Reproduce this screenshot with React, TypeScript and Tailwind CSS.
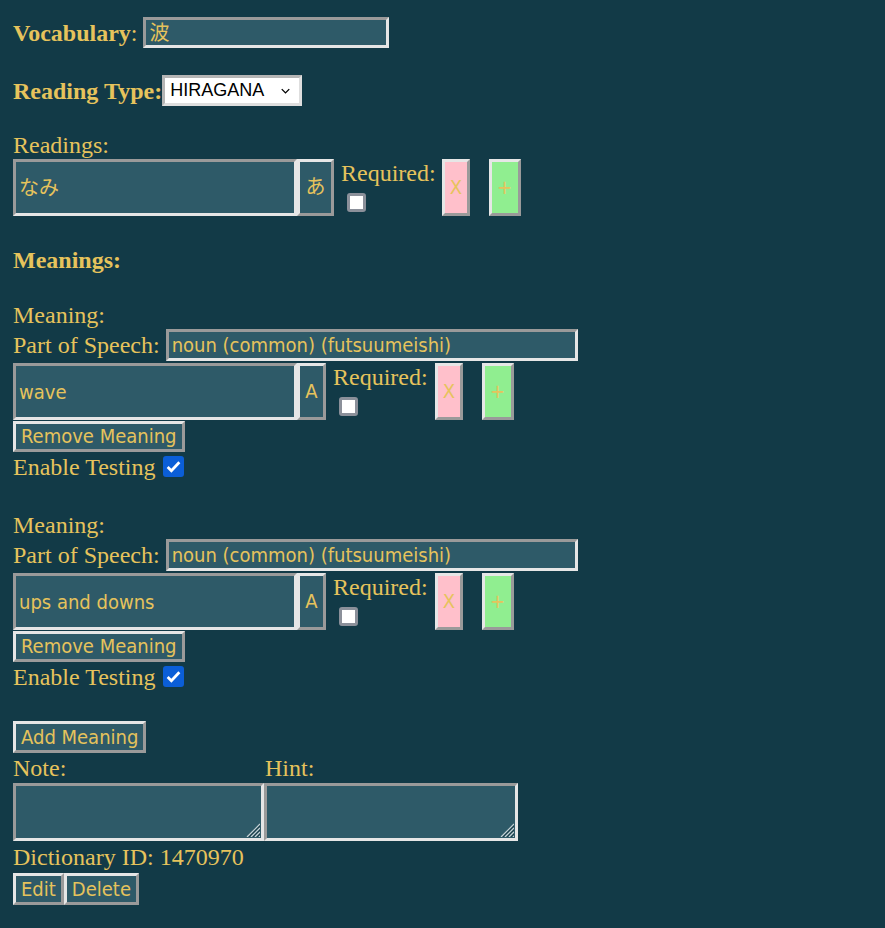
import React from "react";

const serif = "font-['Liberation_Serif',serif]";
const sans = "font-['DejaVu_Sans_Condensed','DejaVu_Sans','Noto_Sans_CJK_JP',sans-serif]";

const inset =
  "border-[3px] border-solid border-t-[#9a9a9a] border-l-[#9a9a9a] border-r-[#e6e6e6] border-b-[#e6e6e6]";
const outset =
  "border-[3px] border-solid border-t-[#e6e6e6] border-l-[#e6e6e6] border-r-[#9a9a9a] border-b-[#9a9a9a]";

function TextBox({ value, className }: { value: string; className: string }) {
  return (
    <div
      className={`${inset} ${sans} bg-[#2e5a68] text-[20px] leading-[24px] text-[#e6c35c] flex items-center px-[3px] ${className}`}
    >
      {value}
    </div>
  );
}

function Btn({
  label,
  className = "",
}: {
  label: string;
  className?: string;
}) {
  return (
    <button
      className={`${outset} ${sans} text-[20px] leading-[25px] text-[#e6c35c] px-[5px] ${className}`}
    >
      {label}
    </button>
  );
}

function EmptyBox() {
  return (
    <span className="mt-[6px] ml-[6px] block w-[19px] h-[19px] rounded-[3px] border-[3px] border-[#8b909a] bg-white" />
  );
}

function CheckedBox() {
  return (
    <span className="ml-[7px] inline-flex items-center justify-center w-[21px] h-[21px] rounded-[3px] bg-[#0b5ed7]">
      <svg viewBox="0 0 16 16" className="w-[17px] h-[17px]">
        <path d="M2.5 8.5l3.5 3.5 7.5-8" fill="none" stroke="white" strokeWidth="2.6" />
      </svg>
    </span>
  );
}

function EntryRow({
  value,
  toggle,
  toggleW,
  gap,
}: {
  value: string;
  toggle: string;
  toggleW: string;
  gap: string;
}) {
  return (
    <div className="flex items-start h-[57px]">
      <TextBox value={value} className="w-[284px] h-[57px]" />
      <Btn label={toggle} className={`h-[57px] ${toggleW} px-0 bg-[#2e5a68]`} />
      <div className={`ml-[7px] ${gap} flex flex-col`}>
        <span className="leading-[28px]">Required:</span>
        <EmptyBox />
      </div>
      <Btn label="X" className="h-[57px] w-[28px] px-0 bg-[#ffc0cb]" />
      <Btn label="+" className="ml-[19px] h-[57px] w-[32px] px-0 bg-[#90ee90]" />
    </div>
  );
}

function Meaning({ value }: { value: string }) {
  return (
    <div className="flex flex-col">
      <div className="leading-[27px]">Meaning:</div>
      <div className="flex items-center h-[32px]">
        <span>Part of Speech:</span>
        <TextBox
          value="noun (common) (futsuumeishi)"
          className="ml-[6px] w-[412px] h-[32px]"
        />
      </div>
      <div className="flex mt-[2px]">
        <EntryRow value={value} toggle="A" toggleW="w-[29px]" gap="mr-[7px]" />
      </div>
      <div className="flex mt-[1px]">
        <Btn label="Remove Meaning" className="h-[31px] bg-[#2e5a68]" />
      </div>
      <div className="flex items-center h-[29px]">
        <span>Enable Testing</span>
        <CheckedBox />
      </div>
    </div>
  );
}

function ResizeGrip() {
  return (
    <svg viewBox="0 0 14 14" className="absolute right-[1px] bottom-[1px] w-[14px] h-[14px]">
      <path d="M14 1L1 14M14 5L5 14M14 9L9 14M14 13L13 14" stroke="#c9d3d6" strokeWidth="1.2" />
      <path d="M14 3L3 14M14 7L7 14M14 11L11 14" stroke="#1b3c47" strokeWidth="1" />
    </svg>
  );
}

export default function App() {
  return (
    <div
      className={`min-h-screen bg-[#123a47] text-[#e6c35c] ${serif} text-[24px] px-[13px] pt-[17px] pb-[20px]`}
    >
      <div className="flex items-center h-[31px]">
        <span>
          <b>Vocabulary</b>:
        </span>
        <TextBox value="波" className="ml-[6px] w-[246px] h-[31px]" />
      </div>

      <div className="flex items-center h-[31px] mt-[27px]">
        <b>Reading Type:</b>
        <div className="ml-0 w-[140px] h-[31px] bg-white border-[3px] border-t-[#b5b5b5] border-l-[#b5b5b5] border-r-[#dedede] border-b-[#dedede] flex items-center justify-between pl-[5px] pr-[9px] font-['Liberation_Sans',sans-serif] text-[18px] text-black">
          <span>HIRAGANA</span>
          <svg viewBox="0 0 12 8" className="w-[9px] h-[6px]">
            <path d="M1 1.5l5 5 5-5" fill="none" stroke="black" strokeWidth="1.8" />
          </svg>
        </div>
      </div>

      <div className="mt-[25px] leading-[28px]">Readings:</div>
      <EntryRow value="なみ" toggle="あ" toggleW="w-[37px]" gap="mr-[6px]" />

      <div className="mt-[30px] leading-[28px] font-bold">Meanings:</div>

      <div className="mt-[28px]">
        <Meaning value="wave" />
      </div>
      <div className="mt-[31px]">
        <Meaning value="ups and downs" />
      </div>

      <div className="flex mt-[30px]">
        <Btn label="Add Meaning" className="h-[32px] bg-[#2e5a68]" />
      </div>

      <div className="flex">
        <div className="flex flex-col w-[251px]">
          <span className="leading-[30px]">Note:</span>
          <div className={`relative ${inset} bg-[#2e5a68] h-[58px]`}>
            <ResizeGrip />
          </div>
        </div>
        <div className="flex flex-col w-[254px]">
          <span className="leading-[30px] pl-[1px]">Hint:</span>
          <div className={`relative ${inset} bg-[#2e5a68] h-[58px]`}>
            <ResizeGrip />
          </div>
        </div>
      </div>

      <div className="leading-[32px]">Dictionary ID: 1470970</div>
      <div className="flex">
        <Btn label="Edit" className="h-[32px] bg-[#2e5a68]" />
        <Btn label="Delete" className="h-[32px] bg-[#2e5a68]" />
      </div>
    </div>
  );
}
